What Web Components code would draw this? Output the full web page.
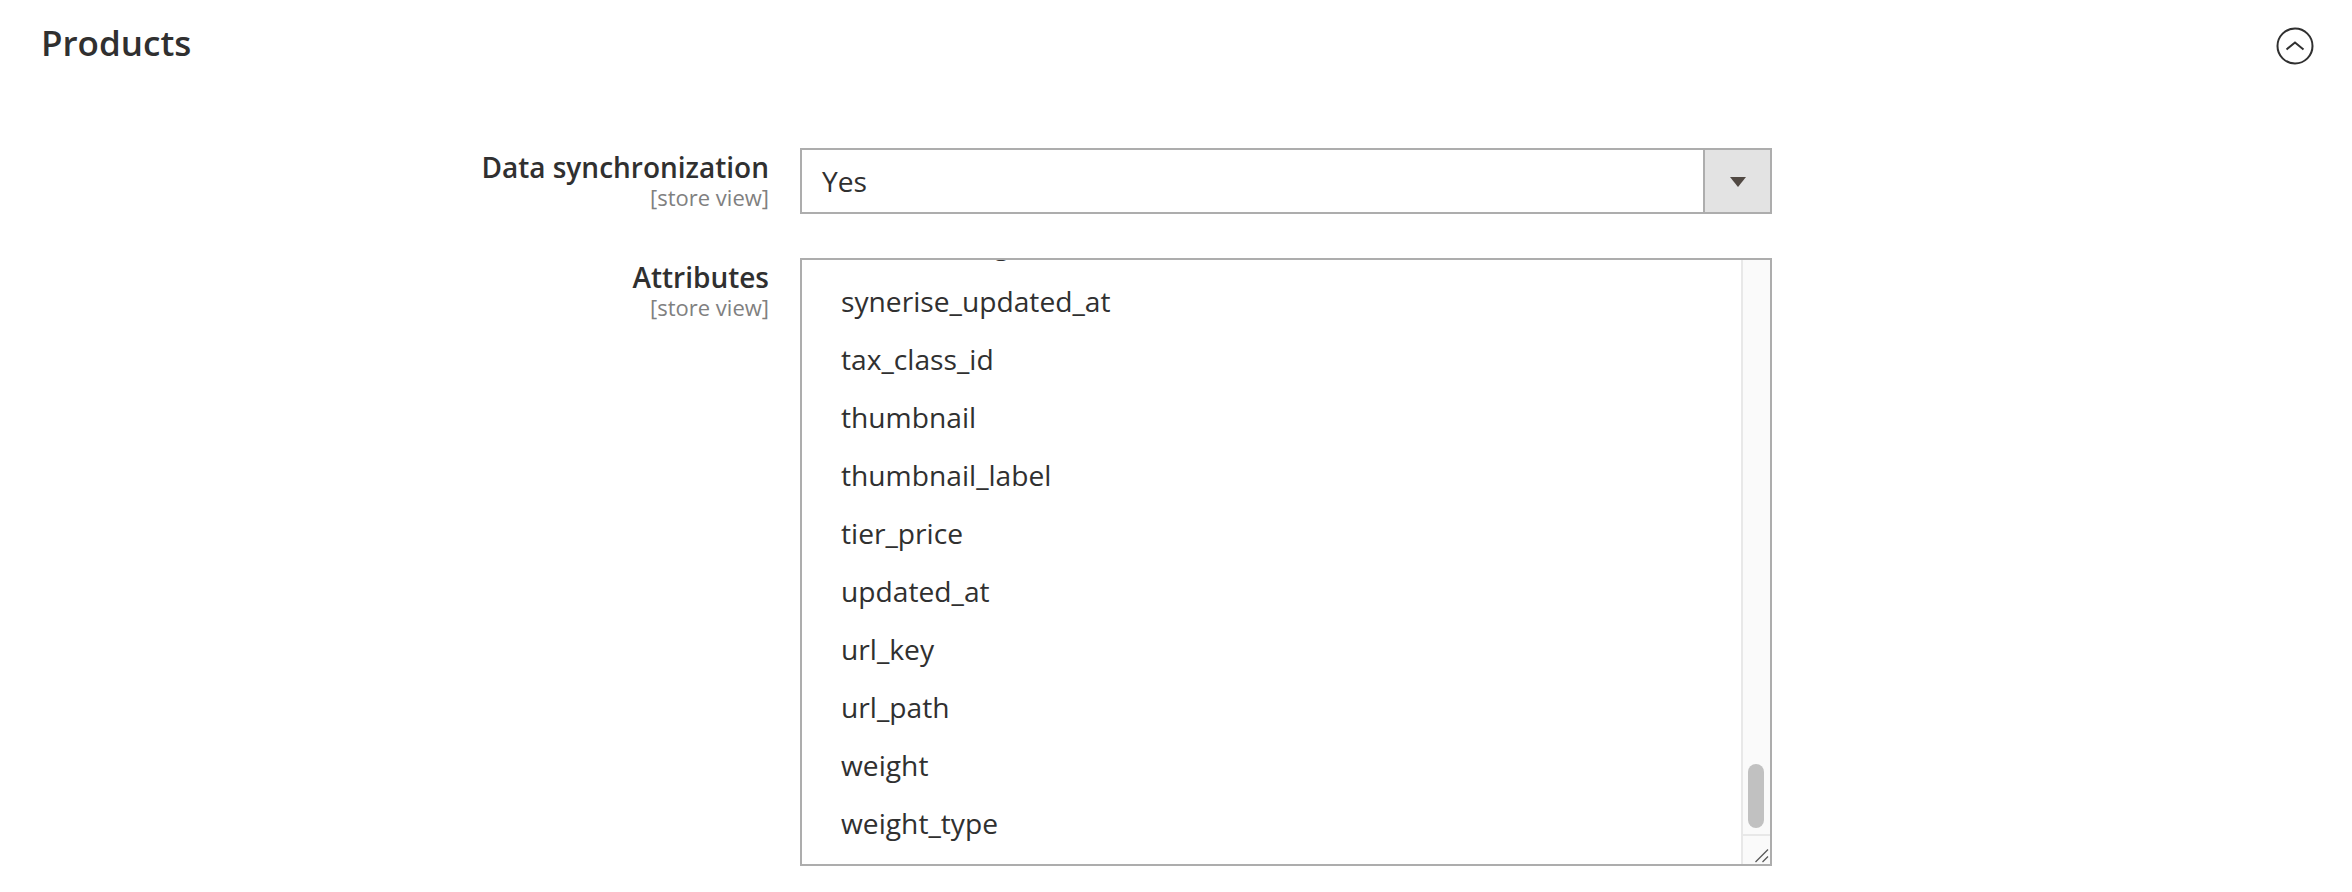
<!DOCTYPE html>
<html>
<head>
<meta charset="utf-8">
<title>Products</title>
<style>
  html, body { margin: 0; padding: 0; background: #fff; }
  body { font-family: "Open Sans", sans-serif; color: #303030; overflow: hidden; }
</style>
</head>
<body>
<config-section heading="Products">
  <config-field label="Data synchronization" scope="[store view]">
    <config-select value="Yes"></config-select>
  </config-field>
  <config-field label="Attributes" scope="[store view]">
    <config-multiselect>
      <config-option>swatch_image</config-option>
      <config-option>synerise_updated_at</config-option>
      <config-option>tax_class_id</config-option>
      <config-option>thumbnail</config-option>
      <config-option>thumbnail_label</config-option>
      <config-option>tier_price</config-option>
      <config-option>updated_at</config-option>
      <config-option>url_key</config-option>
      <config-option>url_path</config-option>
      <config-option>weight</config-option>
      <config-option>weight_type</config-option>
    </config-multiselect>
  </config-field>
</config-section>

<script>
class ConfigSection extends HTMLElement {
  constructor() {
    super();
    this.attachShadow({ mode: "open" });
  }

  connectedCallback() {
    this.shadowRoot.innerHTML = /* html */ `
      <style>
        :host { display: block; }
        .head {
          display: flex;
          justify-content: space-between;
          align-items: center;
          padding: 22px 38px 0 41px;
          height: 48px;
        }
        h2 {
          margin: 0 0 6px;
          font-size: 35px;
          line-height: 44px;
          font-weight: 600;
          color: #303030;
        }
        svg { display: block; }
        .body {
          display: flex;
          flex-direction: column;
          gap: 44px;
          padding-top: 78px;
        }
      </style>
      <div class="head">
        <h2>${this.getAttribute("heading")}</h2>
        <svg width="38" height="38" viewBox="0 0 38 38" fill="none" stroke="#303030" stroke-width="2">
          <circle cx="19" cy="19" r="17.5"/>
          <path d="M10.5 22.5 L19 15.5 L27.5 22.5"/>
        </svg>
      </div>
      <div class="body"><slot></slot></div>
    `;
  }
}

class ConfigField extends HTMLElement {
  constructor() {
    super();
    this.attachShadow({ mode: "open" });
  }

  connectedCallback() {
    this.shadowRoot.innerHTML = /* html */ `
      <style>
        :host {
          display: grid;
          grid-template-columns: 769px 972px;
          column-gap: 31px;
        }
        .label { text-align: right; padding-top: 2px; }
        .name {
          font-size: 28px;
          line-height: 35px;
          font-weight: 600;
          color: #303030;
        }
        .scope {
          font-size: 22px;
          line-height: 24px;
          color: #808080;
        }
      </style>
      <div class="label">
        <div class="name">${this.getAttribute("label")}</div>
        <div class="scope">${this.getAttribute("scope")}</div>
      </div>
      <div><slot></slot></div>
    `;
  }
}

class ConfigSelect extends HTMLElement {
  constructor() {
    super();
    this.attachShadow({ mode: "open" });
  }

  connectedCallback() {
    this.shadowRoot.innerHTML = /* html */ `
      <style>
        :host {
          display: flex;
          box-sizing: border-box;
          height: 66px;
          border: 2px solid #adadad;
          background: #fff;
        }
        .value {
          flex: 1;
          padding-left: 20px;
          font-size: 28.2px;
          line-height: 62px;
          color: #303030;
        }
        .btn {
          flex: none;
          width: 67px;
          box-sizing: border-box;
          padding-top: 2px;
          border-left: 2px solid #adadad;
          background: #e3e3e3;
          display: flex;
          align-items: center;
          justify-content: center;
        }
        .arrow {
          width: 0;
          height: 0;
          border-style: solid;
          border-width: 10px 8.5px 0;
          border-color: #514943 transparent transparent;
        }
      </style>
      <div class="value">${this.getAttribute("value")}</div>
      <div class="btn"><div class="arrow"></div></div>
    `;
  }
}

class ConfigMultiselect extends HTMLElement {
  constructor() {
    super();
    this.attachShadow({ mode: "open" });
  }

  connectedCallback() {
    this.shadowRoot.innerHTML = /* html */ `
      <style>
        :host {
          display: flex;
          box-sizing: border-box;
          height: 608px;
          border: 2px solid #adadad;
          background: #fff;
          overflow: hidden;
        }
        .list {
          flex: 1;
          min-width: 0;
          overflow: hidden;
          padding-left: 39px;
        }
        /* list is scrolled to the end, so the first row is cut by the top edge */
        .rows { display: block; margin-top: -46px; }
        .bar {
          flex: none;
          width: 29px;
          box-sizing: border-box;
          border-left: 2px solid #e8e8e8;
          background: #fafafa;
          display: flex;
          flex-direction: column;
        }
        .track {
          flex: 1;
          display: flex;
          flex-direction: column;
          justify-content: flex-end;
          padding-bottom: 6px;
        }
        .thumb {
          width: 16px;
          height: 64px;
          margin-left: 5px;
          border-radius: 8px;
          background: #c1c1c1;
        }
        .corner {
          flex: none;
          height: 30px;
          border-top: 2px solid #e8e8e8;
          box-sizing: border-box;
        }
        .corner svg { display: block; }
      </style>
      <div class="list"><div class="rows"><slot></slot></div></div>
      <div class="bar">
        <div class="track"><div class="thumb"></div></div>
        <div class="corner">
          <svg width="27" height="28" viewBox="0 0 27 28" fill="none" stroke="#555" stroke-width="1.3">
            <path d="M12.5 26 L25 13.5"/>
            <path d="M19.5 26 L25 20.5"/>
          </svg>
        </div>
      </div>
    `;
  }
}

class ConfigOption extends HTMLElement {
  constructor() {
    super();
    this.attachShadow({ mode: "open" });
  }

  connectedCallback() {
    this.shadowRoot.innerHTML = /* html */ `
      <style>
        :host {
          display: block;
          height: 58px;
          font-size: 28.2px;
          line-height: 58px;
          color: #303030;
          white-space: nowrap;
        }
      </style>
      <slot></slot>
    `;
  }
}

customElements.define("config-section", ConfigSection);
customElements.define("config-field", ConfigField);
customElements.define("config-select", ConfigSelect);
customElements.define("config-multiselect", ConfigMultiselect);
customElements.define("config-option", ConfigOption);
</script>
</body>
</html>
